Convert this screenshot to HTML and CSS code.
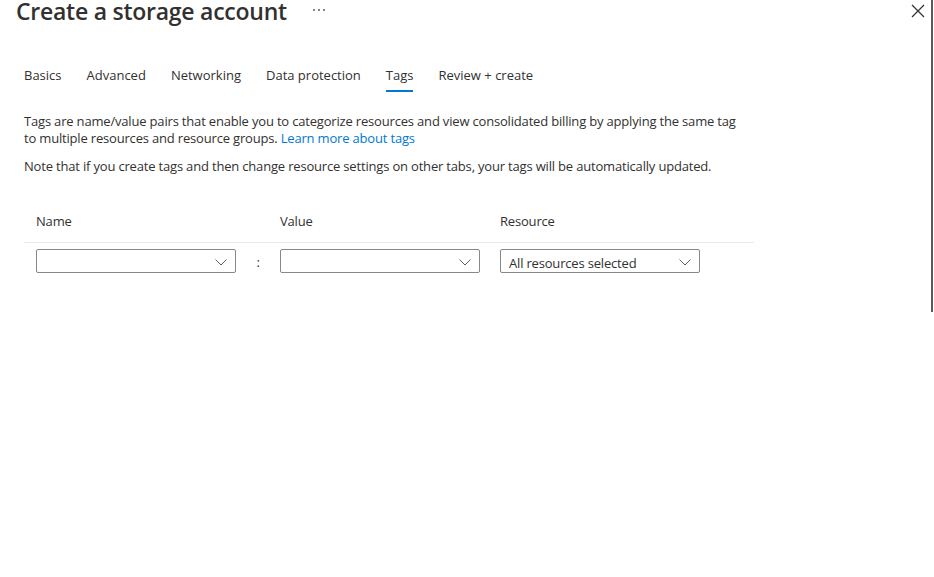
FILE: index.html
```html
<!DOCTYPE html>
<html lang="en">
<head>
<meta charset="utf-8">
<title>Create a storage account</title>
<link rel="stylesheet" href="styles.css">
</head>
<body>
<div class="blade">
  <header class="blade-header">
    <h1 class="blade-title">Create a storage account</h1>
    <button class="more" aria-label="More">
      <svg width="14" height="4" viewBox="0 0 14 4"><circle cx="2" cy="2" r="1" fill="#605e5c"/><circle cx="7" cy="2" r="1" fill="#605e5c"/><circle cx="12" cy="2" r="1" fill="#605e5c"/></svg>
    </button>
    <span class="spacer"></span>
    <button class="close" aria-label="Close">
      <svg width="14" height="14" viewBox="0 0 14 14"><path d="M1 1 L13 13 M13 1 L1 13" stroke="#323130" stroke-width="1.2" fill="none"/></svg>
    </button>
  </header>

  <nav class="tabs">
    <a class="tab">Basics</a>
    <a class="tab">Advanced</a>
    <a class="tab">Networking</a>
    <a class="tab">Data protection</a>
    <a class="tab active">Tags</a>
    <a class="tab">Review + create</a>
  </nav>

  <section class="content">
    <p class="desc">Tags are name/value pairs that enable you to categorize resources and view consolidated billing by applying the same tag to multiple resources and resource groups. <a class="link">Learn more about tags</a></p>
    <p class="desc note">Note that if you create tags and then change resource settings on other tabs, your tags will be automatically updated.</p>

    <div class="tag-table">
      <div class="row head">
        <div class="cell c-name">Name</div>
        <div class="cell c-sep"></div>
        <div class="cell c-value">Value</div>
        <div class="cell c-gap"></div>
        <div class="cell c-res">Resource</div>
      </div>
      <div class="row body">
        <div class="cell c-name">
          <div class="combo"><span class="combo-text"></span><svg class="chev" width="12" height="7" viewBox="0 0 12 7"><path d="M0.5 0.5 L6 6 L11.5 0.5" stroke="#605e5c" stroke-width="1" fill="none"/></svg></div>
        </div>
        <div class="cell c-sep"><span class="colon">:</span></div>
        <div class="cell c-value">
          <div class="combo"><span class="combo-text"></span><svg class="chev" width="12" height="7" viewBox="0 0 12 7"><path d="M0.5 0.5 L6 6 L11.5 0.5" stroke="#605e5c" stroke-width="1" fill="none"/></svg></div>
        </div>
        <div class="cell c-gap"></div>
        <div class="cell c-res">
          <div class="combo"><span class="combo-text">All resources selected</span><svg class="chev" width="12" height="7" viewBox="0 0 12 7"><path d="M0.5 0.5 L6 6 L11.5 0.5" stroke="#605e5c" stroke-width="1" fill="none"/></svg></div>
        </div>
      </div>
    </div>
  </section>
  <div class="scroll-thumb"></div>
</div>
</body>
</html>
```

FILE: styles.css
```css
* { box-sizing: border-box; }
html, body { margin: 0; padding: 0; background: #fff; }
body {
  font-family: "Open Sans", "Noto Sans", sans-serif;
  font-size: 13px;
  letter-spacing: -0.18px;
  color: #323130;
  width: 934px;
  height: 577px;
  overflow: hidden;
}
.blade { position: relative; height: 577px; }

.blade-header {
  display: flex;
  align-items: center;
  height: 24px;
  margin-top: -1px;
  padding: 0 9px 0 16px;
}
.blade-title {
  margin: 0;
  font-size: 23px;
  font-weight: 600;
  letter-spacing: -0.25px;
  line-height: 24px;
  color: #323130;
  white-space: nowrap;
}
.more {
  border: 0; background: none; padding: 0;
  margin-left: 25px;
  display: flex;
  margin-top: -3px;
}
.spacer { flex: 1; }
.close {
  border: 0; background: none; padding: 0;
  display: flex;
  margin-top: -1px;
}

.tabs {
  display: flex;
  gap: 25px;
  padding-left: 24px;
  margin-top: 42px;
}
.tab {
  line-height: 20px;
  padding-bottom: 5px;
  border-bottom: 2px solid transparent;
  color: #323130;
  white-space: nowrap;
  letter-spacing: 0;
}
.tab.active { border-bottom-color: #0078d4; }

.content { padding-left: 24px; }
.desc {
  margin: 21px 0 0;
  line-height: 17px;
  width: 720px;
}
.desc.note { margin-top: 11px; }
.link { color: #0078d4; }

.tag-table { width: 730px; margin-top: 25px; }
.row { display: flex; }
.row.head {
  border-bottom: 1px solid #edebe9;
}
.row.head .cell {
  line-height: 20px;
  padding-top: 11px;
  padding-bottom: 11px;
}
.row.body { padding-top: 6px; }
.cell { flex: none; }
.c-name { width: 212px; padding-left: 12px; }
.c-sep { width: 44px; display: flex; justify-content: center; }
.c-value { width: 200px; }
.c-gap { width: 20px; }
.c-res { width: 200px; }

.combo {
  display: flex;
  align-items: center;
  height: 24px;
  width: 200px;
  border: 1px solid #8a8886;
  border-radius: 2px;
  padding: 0 8px 0 8px;
}
.combo-text { flex: 1; line-height: 20px; padding-top: 3px; white-space: nowrap; }
.chev { flex: none; margin-top: 3px; }
.colon { line-height: 24px; padding-top: 1px; }

.scroll-thumb {
  position: absolute;
  top: 0;
  right: 1px;
  width: 2px;
  height: 313px;
  background: #5a5a5a;
}
```
